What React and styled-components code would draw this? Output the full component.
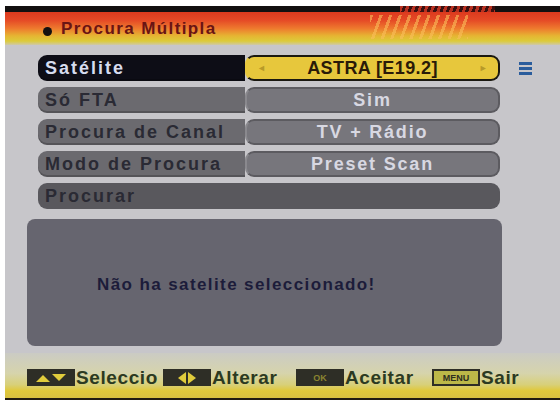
import React from "react";
import styled, { createGlobalStyle } from "styled-components";

const Global = createGlobalStyle`
  html, body { margin: 0; padding: 0; background: #ffffff; }
  body { font-family: "Liberation Sans", Arial, sans-serif; }
`;

const Screen = styled.div`
  margin: 6px 0 0 5px;
  width: 555px;
  height: 394px;
  background: #c7c6ca;
  display: flex;
  flex-direction: column;
  overflow: hidden;
`;

const Header = styled.div`
  position: relative;
  height: 33px;
  border-top: 6px solid #121010;
  background: linear-gradient(to bottom, #dc3a1e 0%, #e54a26 25%, #ee7a2e 50%, #e6b432 72%, #dccb3a 88%, #cfc8a8 100%);
  display: flex;
  align-items: center;
  padding-left: 38px;
  gap: 9px;
`;

const Dots = styled.div`
  position: absolute;
  top: -6px;
  left: 395px;
  width: 95px;
  height: 6px;
  background: repeating-linear-gradient(110deg, #b83020 0 3px, #3a1010 3px 6px);
`;

const Stripes = styled.div`
  position: absolute;
  top: 3px;
  left: 365px;
  width: 98px;
  height: 24px;
  background: repeating-linear-gradient(110deg, rgba(250, 190, 90, 0.6) 0 3px, transparent 3px 9px);
`;

const Bullet = styled.span`
  width: 9px;
  height: 9px;
  border-radius: 50%;
  background: #141010;
  margin-top: 6px;
`;

const Title = styled.div`
  color: #6a1414;
  font-size: 17px;
  font-weight: bold;
  letter-spacing: 1.4px;
`;

const Rows = styled.div`
  display: flex;
  flex-direction: column;
  gap: 6px;
  padding: 10px 0 0 33px;
`;

const Row = styled.div`
  display: flex;
  align-items: center;
  height: 26px;
`;

const Label = styled.div`
  width: 207px;
  height: 26px;
  box-sizing: border-box;
  border-radius: 9px 0 0 9px;
  padding-left: 7px;
  display: flex;
  align-items: center;
  font-size: 18px;
  font-weight: bold;
  letter-spacing: 2px;
  white-space: nowrap;
  background: ${p => (p.$active ? "#0d0d16" : "#6b6a6f")};
  color: ${p => (p.$active ? "#d6dcef" : "#2a2a34")};
  box-shadow: inset 0 -2px 0 rgba(0, 0, 0, 0.2);
`;

const Value = styled.div`
  width: 255px;
  height: 26px;
  box-sizing: border-box;
  border-radius: 9px;
  display: flex;
  align-items: center;
  justify-content: center;
  position: relative;
  font-size: 18px;
  font-weight: bold;
  letter-spacing: ${p => (p.$active ? "0.4px" : "1.8px")};
  background: ${p => (p.$active ? "#e7c73c" : "#77767c")};
  color: ${p => (p.$active ? "#2a1a08" : "#d8d8e2")};
  border: 2px solid ${p => (p.$active ? "#1a1810" : "#5c5b60")};
  border-left-color: ${p => (p.$active ? "#e7c73c" : "#8a898e")};
`;

const Arrow = styled.span`
  position: absolute;
  top: 50%;
  transform: translateY(-50%);
  ${p => (p.$right ? "right: 10px;" : "left: 10px;")}
  color: #b89a28;
  font-size: 9px;
`;

const Wide = styled.div`
  width: 462px;
  height: 26px;
  box-sizing: border-box;
  border-radius: 9px;
  padding-left: 7px;
  display: flex;
  align-items: center;
  background: #59585d;
  color: #2a2a34;
  font-size: 18px;
  font-weight: bold;
  letter-spacing: 2px;
`;

const MenuIcon = styled.div`
  margin-left: 19px;
  width: 13px;
  display: flex;
  flex-direction: column;
  gap: 2px;
  & > span {
    height: 3px;
    background: #2a5c9c;
  }
`;

const Message = styled.div`
  margin: 10px 0 0 22px;
  width: 475px;
  height: 127px;
  border-radius: 8px;
  background: #66656f;
  display: flex;
  align-items: center;
  padding: 4px 0 0 70px;
  box-sizing: border-box;
  color: #1c1c3a;
  font-size: 17px;
  font-weight: bold;
  letter-spacing: 1.4px;
`;

const Footer = styled.div`
  margin-top: 7px;
  flex: 1;
  border-bottom: 2px solid #201a10;
  background: linear-gradient(to bottom, #cbcbc4 0%, #d6d4ac 45%, #d8d07a 70%, #e0c83a 84%, #d8c040 100%);
  display: flex;
  align-items: center;
  padding: 4px 0 0 22px;
  box-sizing: border-box;
`;

const Hint = styled.div`
  display: flex;
  align-items: center;
  width: ${p => p.$w}px;
`;

const Key = styled.div`
  width: 48px;
  height: 17px;
  flex-shrink: 0;
  background: ${p => (p.$menu ? "#bcb848" : "#2e2e26")};
  border: ${p => (p.$menu ? "2px solid #2e2e26" : "none")};
  box-sizing: border-box;
  display: flex;
  align-items: center;
  justify-content: center;
  gap: 2px;
  color: ${p => (p.$menu ? "#2e2e20" : "#8a8430")};
  font-size: 9px;
  font-weight: bold;
`;

const HintText = styled.span`
  color: #2c3a22;
  font-size: 19px;
  font-weight: bold;
  letter-spacing: 0.6px;
  margin-left: 1px;
  white-space: nowrap;
`;

const Tri = ({ d }) => (
  <svg width="14" height="8" viewBox="0 0 14 8">
    <path d={d} fill="#e0cc3c" />
  </svg>
);

const rows = [
  { label: "Só FTA", value: "Sim" },
  { label: "Procura de Canal", value: "TV + Rádio" },
  { label: "Modo de Procura", value: "Preset Scan" },
];

export default function App() {
  return (
    <>
      <Global />
      <Screen>
        <Header>
          <Dots />
          <Stripes />
          <Bullet />
          <Title>Procura Múltipla</Title>
        </Header>
        <Rows>
          <Row>
            <Label $active>Satélite</Label>
            <Value $active>
              <Arrow>◄</Arrow>
              ASTRA [E19.2]
              <Arrow $right>►</Arrow>
            </Value>
            <MenuIcon><span /><span /><span /></MenuIcon>
          </Row>
          {rows.map(r => (
            <Row key={r.label}>
              <Label>{r.label}</Label>
              <Value>{r.value}</Value>
            </Row>
          ))}
          <Row>
            <Wide>Procurar</Wide>
          </Row>
        </Rows>
        <Message>Não ha satelite seleccionado!</Message>
        <Footer>
          <Hint $w={136}>
            <Key>
              <Tri d="M0 8 L7 1 L14 8 Z" />
              <Tri d="M0 0 L14 0 L7 7 Z" />
            </Key>
            <HintText>Seleccio</HintText>
          </Hint>
          <Hint $w={133}>
            <Key>
              <svg width="8" height="12" viewBox="0 0 8 12"><path d="M8 0 L0 6 L8 12 Z" fill="#e0cc3c" /></svg>
              <svg width="8" height="12" viewBox="0 0 8 12"><path d="M0 0 L8 6 L0 12 Z" fill="#e0cc3c" /></svg>
            </Key>
            <HintText>Alterar</HintText>
          </Hint>
          <Hint $w={136}>
            <Key>OK</Key>
            <HintText>Aceitar</HintText>
          </Hint>
          <Hint $w={100}>
            <Key $menu>MENU</Key>
            <HintText>Sair</HintText>
          </Hint>
        </Footer>
      </Screen>
    </>
  );
}
